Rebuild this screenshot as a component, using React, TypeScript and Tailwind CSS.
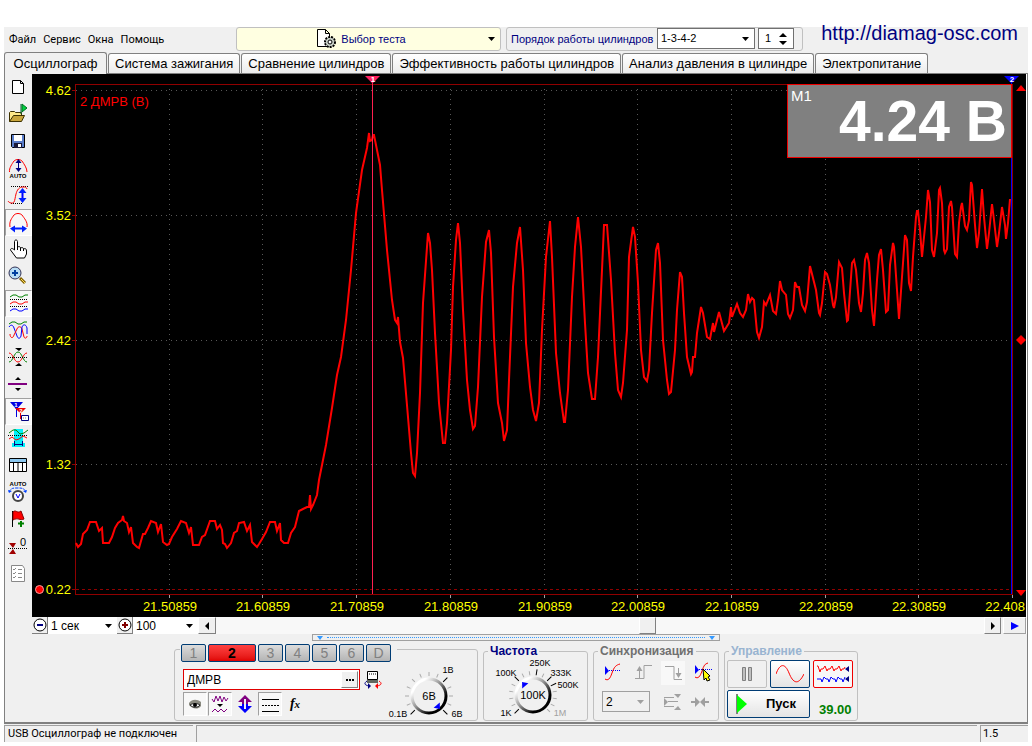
import { ReactElement, ReactNode } from 'react';

const TABS = [
  'Система зажигания',
  'Сравнение цилиндров',
  'Эффективность работы цилиндров',
  'Анализ давления в цилиндре',
  'Электропитание',
];

const TIME_MARKS = [
  { x: 169, label: '21.50859' },
  { x: 262, label: '21.60859' },
  { x: 356, label: '21.70859' },
  { x: 450, label: '21.80859' },
  { x: 544, label: '21.90859' },
  { x: 637, label: '22.00859' },
  { x: 731, label: '22.10859' },
  { x: 825, label: '22.20859' },
  { x: 918, label: '22.30859' },
];

const LEVELS = [
  { y: 90, label: '4.62' },
  { y: 215, label: '3.52' },
  { y: 340, label: '2.42' },
  { y: 464, label: '1.32' },
  { y: 589, label: '0.22' },
];

// mass air flow sensor samples
const TRACE =
  '76,543 78,547 81,544 83,534 87,530 90,522 96,522 99,531 102,528 103,543 109,543 112,537 115,528 118,523 122,520 123,516 124,521 127,523 129,532 131,527 133,543 137,547 139,548 143,534 145,534 148,528 151,521 156,523 158,532 161,524 163,542 167,545 169,544 172,537 177,529 181,521 186,523 189,533 191,527 193,545 199,545 202,537 205,535 210,521 215,521 217,529 220,525 222,530 223,543 225,544 227,548 231,543 234,533 237,531 239,523 244,522 247,531 250,525 252,542 257,547 259,544 262,539 266,532 270,522 275,522 277,531 280,523 281,540 284,543 288,543 291,533 295,527 299,511 303,509 307,507 309,507 310,495 311,509 313,505 317,495 319,480 326,445 332,408 337,375 341,357 346,320 351,270 356,213 362,170 367,148 369,133 370,141 372,140 373,135 374,135 377,150 380,165 382,190 387,250 392,300 395,320 397,323 398,317 400,342 403,358 408,417 411,453 413,473 415,476 417,453 420,393 423,303 428,233 430,243 432,270 435,333 439,403 443,443 445,443 447,423 451,350 453,287 456,240 458,223 460,243 463,310 467,380 470,410 473,429 475,426 478,387 482,297 486,242 489,230 491,253 494,337 498,403 502,423 504,441 507,430 509,380 513,287 517,243 520,227 523,270 526,343 530,387 533,410 536,421 539,403 542,330 546,257 550,221 552,257 556,353 560,393 564,422 565,422 568,390 572,297 575,247 578,217 581,247 585,323 588,373 592,399 595,399 598,357 602,270 604,225 607,225 611,280 615,353 618,390 621,397 623,383 627,330 629,257 633,227 635,237 638,283 641,350 644,377 647,381 649,370 652,313 656,250 658,243 660,263 663,340 667,380 669,394 671,392 675,350 677,310 680,272 682,277 684,313 687,357 691,374 692,372 693,357 695,357 697,333 701,307 703,313 707,337 710,339 713,323 714,332 719,312 724,331 729,323 731,307 732,317 737,304 740,313 743,317 746,310 748,294 750,302 752,298 754,300 757,332 759,338 762,327 764,302 766,305 770,295 773,311 776,314 778,300 780,281 782,290 786,295 788,314 790,318 793,310 795,282 797,287 799,287 802,305 805,311 807,302 810,266 812,274 816,290 819,313 820,315 822,303 825,272 827,274 830,285 833,305 834,308 836,297 839,262 842,268 844,293 847,321 848,320 852,263 854,260 856,270 859,303 861,312 863,293 865,260 867,253 869,263 872,310 874,326 877,280 879,255 881,249 883,270 886,312 888,310 890,265 893,243 894,247 897,290 899,319 902,277 905,235 907,240 909,283 911,291 913,257 916,217 917,211 918,211 920,230 922,257 923,247 926,217 928,190 930,202 932,250 934,257 937,233 939,190 940,188 942,203 944,250 945,253 947,249 949,207 951,201 952,207 955,254 957,257 959,223 961,207 962,203 965,226 967,230 969,220 971,182 972,185 975,225 977,248 979,233 982,189 984,217 987,249 989,233 992,204 994,220 997,247 999,233 1002,207 1005,225 1006,239 1008,223 1010,199';

interface Tool {
  title: string;
  pressed?: boolean;
  art: ReactNode;
}

const TOOLS: Tool[] = [
  {
    title: 'Новый',
    art: <path d="M4.5 3.5h8l3 3v10h-11zM12.5 3.5v3h3" fill="#fff" stroke="#000" />,
  },
  {
    title: 'Открыть',
    art: (
      <>
        <path d="M1.5 17.5v-9l1-1h4l1 1h6v3" fill="#ffe98a" stroke="#3c3000" />
        <path d="M1.5 17.5l4-6h11l-3 6z" fill="#c9a63c" stroke="#3c3000" />
        <path d="M13 0v10" stroke="#006030" />
        <path d="M14 0l5 4-5 4z" fill="#00d040" stroke="#007020" />
      </>
    ),
  },
  {
    title: 'Сохранить',
    art: (
      <>
        <path d="M3.5 3.5h13v13h-12l-1-1z" fill="#5b7ecb" stroke="#000" />
        <path d="M6 4h8v6H6z" fill="#fff" />
        <path d="M6 12h8v5H6z" fill="#1a1a3a" />
        <path d="M10 13h3v3h-3z" fill="#fff" />
      </>
    ),
  },
  {
    title: 'Автоматический масштаб',
    art: (
      <>
        <path d="M1.5 14C1 10 4 6 6 3c2-2 6-2 8 0 2 3 5 7 5 11" stroke="#f00" fill="none" />
        <path d="M10.5 2v11" stroke="#000080" />
        <path d="M10.5 1l3 4h-6zM10.5 14l3-4h-6z" fill="#000080" />
        <text x="10" y="20" fontSize="6" fontWeight="bold" textAnchor="middle">AUTO</text>
      </>
    ),
  },
  {
    title: 'Масштаб по вертикали',
    art: (
      <>
        <path d="M3 1.500h17M3 18.500h12" stroke="#000" strokeDasharray="1 1" />
        <path d="M0 16c1 2 5 3 6 1s1-4 2-8 3-7 7-7c3 0 3 0 4 2" stroke="#f00" fill="none" />
        <path d="M14.500 5v11" stroke="#00f" strokeWidth="2" />
        <path d="M14.500 3l4 5h-8zM14.500 18l4-5h-8z" fill="#0020ff" />
      </>
    ),
  },
  {
    title: 'Масштаб по горизонтали',
    pressed: true,
    art: (
      <>
        <path d="M2 15C1 9 4 6 6 3c2-2 6-2 8 0 2 3 6 7 5 12" stroke="#f00" fill="none" />
        <path d="M4 16.500h13" stroke="#0020ff" strokeWidth="2" />
        <path d="M2 16.500l5-3v7zM19 16.500l-5-3v7z" fill="#0020ff" />
      </>
    ),
  },
  {
    title: 'Перемещение',
    art: (
      <path
        d="M6.500 11V2.500c0-2 3-2 3 0V8c2-1 3 0 3 1 2-1 3 0 3 1 2-1 3 0 3 2v3l-2 4h-8l-6-8c0-2 2-2 4 0zM9.500 8v3M12.500 9v3M15.500 10v2"
        fill="#fff"
        stroke="#000"
      />
    ),
  },
  {
    title: 'Лупа',
    art: (
      <>
        <path d="M12 12l5 5" stroke="#806000" strokeWidth="3" />
        <path d="M13 13l4 4" stroke="#ffe060" />
        <circle cx="7" cy="7" r="6" fill="#b8dcf5" stroke="#335" />
        <path d="M4 7h6M7 4v6" stroke="#003fa0" strokeWidth="2" />
      </>
    ),
  },
  {
    title: 'Разделить каналы',
    pressed: true,
    art: (
      <>
        <path d="M2 4l3-2h3l3 2h3l3-2h3" stroke="#008000" fill="none" />
        <path d="M2 6.500h18M2 13.500h18" stroke="#000" strokeDasharray="1 1" />
        <path d="M2 11l3-2h3l3 2h3l3-2h3" stroke="#f00" fill="none" />
        <path d="M2 18l3-2h3l3 2h3l3-2h3" stroke="#00f" fill="none" />
      </>
    ),
  },
  {
    title: 'Наложить каналы',
    art: (
      <>
        <path d="M1 4l3-2h3l3 2h3l3-2h3" stroke="#008000" fill="none" />
        <path d="M1 7c2-3 4-2 5 1l3 8c1 3 3 3 4 0" stroke="#00f" fill="none" />
        <path d="M2 14c0 4 3 5 4 1l3-6c1-3 4-3 5 0l2 8c1 2 3 1 3-1" stroke="#f00" fill="none" />
        <path d="M13 16l1-9c1-3 4-3 5 1v6" stroke="#00f" fill="none" />
      </>
    ),
  },
  {
    title: 'Совместить нули',
    art: (
      <>
        <path d="M1 15c4 0 5-10 9-10s5 10 9 10" stroke="#008000" fill="none" />
        <path d="M1 6c4 0 5 9 9 9s5-9 9-9" stroke="#f00" fill="none" />
        <path d="M0 10.500h20" stroke="#000" strokeDasharray="1 1" />
        <path d="M7 1h7l-3 3zM7 19h7l-3-3z" />
      </>
    ),
  },
  {
    title: 'Центр',
    art: (
      <>
        <path d="M0 10h19" stroke="#800080" strokeWidth="2" />
        <path d="M10 3l3 3H7zM10 17l3-3H7z" />
      </>
    ),
  },
  {
    title: 'Маркеры',
    pressed: true,
    art: (
      <>
        <path d="M2 1h13L9 8v8H8V8z" fill="#0000e0" />
        <path d="M7 7h11l-5 5v6h-1v-6z" fill="#f00000" />
        <text x="8" y="6" fontSize="6" fontWeight="bold" textAnchor="middle" fill="#fff">1</text>
        <text x="13" y="12" fontSize="6" fontWeight="bold" textAnchor="middle" fill="#fff">2</text>
        <path d="M13.500 14.500h7v5h-7z" fill="#fff" stroke="#000080" />
        <path d="M15 17h4" stroke="#888" strokeDasharray="1 1" />
      </>
    ),
  },
  {
    title: 'Измерения',
    art: (
      <>
        <path d="M6 1h9v14h2v4H4v-4h2z" fill="#00f0f8" />
        <path d="M1 5l4-3h3l4 4 4-1 4-3" stroke="#008000" fill="none" />
        <path d="M1 11l3-2 4 3 3-1 4-3 4 2" stroke="#f00" fill="none" />
        <path d="M0 7.500h20" stroke="#000" strokeDasharray="1 1" />
        <path d="M6.500 13v5M14.500 13v5M7 16.500h7" stroke="#000080" />
      </>
    ),
  },
  {
    title: 'Таблица',
    art: (
      <>
        <path d="M1.500 3.500h17v13h-17z" fill="#fff" stroke="#000" />
        <path d="M2 4h16v3H2z" fill="#8cc8f0" />
        <path d="M2 7.500h16M5.500 7v9M10 7v9M14.500 7v9" stroke="#000" />
      </>
    ),
  },
  {
    title: 'Авто вольтметр',
    art: (
      <>
        <text x="10" y="4" fontSize="6" fontWeight="bold" textAnchor="middle">AUTO</text>
        <circle cx="10" cy="14" r="5" fill="#fff" stroke="#444" strokeWidth="2" />
        <path d="M8 12l2 4 2-4" stroke="#00f" fill="none" />
        <path d="M1 10c2-4 4-4 8-4 5 0 7 0 9 4" stroke="#0040ff" fill="none" strokeDasharray="3 1" />
        <path d="M0 8l4 1-3 2zM19 8l-4 1 3 2z" fill="#0040ff" />
      </>
    ),
  },
  {
    title: 'Добавить метку',
    art: (
      <>
        <path d="M4.500 2v16" stroke="#000" />
        <path d="M5 3c3-3 4 2 8-1l3 8c-4 2-6-2-11 1z" fill="#f00" stroke="#800" />
        <path d="M10 14.500h6M13 12v6" stroke="#008000" strokeWidth="2" />
      </>
    ),
  },
  {
    title: 'Установить ноль',
    art: (
      <>
        <path d="M1 7h7l-3 5zM1 18h7l-3-5z" fill="#a00000" />
        <path d="M0 12.500h20" stroke="#000" strokeDasharray="1 1" />
        <text x="12" y="10" fontSize="11">0</text>
      </>
    ),
  },
  {
    title: 'Протокол',
    art: (
      <>
        <path d="M3.500 2.500h11l2 3v13h-13z" fill="#fff" stroke="#888" />
        <path d="M5 6l1 1 2-2M5 10l1 1 2-2M5 14l1 1 2-2M10 6.500h4M10 10.500h4M10 14.500h4" stroke="#888" fill="none" />
      </>
    ),
  },
];

const Arrow = (): ReactElement => (
  <svg className="pointer-events-none absolute right-1 h-2 w-2" viewBox="0 0 8 8" aria-hidden="true">
    <path d="M0 2h7L3.500 6z" fill="currentColor" />
  </svg>
);

const Combo = ({ label, value, className }: { label: string; value: string; className: string }): ReactElement => (
  <div className={`relative flex items-center ${className}`}>
    <select aria-label={label} className="h-full w-full appearance-none bg-transparent pl-[3px] focus:outline-none">
      <option>{value}</option>
    </select>
    <Arrow />
  </div>
);

interface Mark {
  angle: number;
  text: string;
  x: number;
  y: number;
  dim?: boolean;
}

interface DialProps {
  label: string;
  value: string;
  step: number;
  pointer: number;
  marks: Mark[];
  className: string;
}

const Dial = ({ label, value, step, pointer, marks, className }: DialProps): ReactElement => {
  const ticks: number[] = [];
  for (let a = -135; a <= 135; a += step) ticks.push(a);

  return (
    <svg className={className} viewBox="-46 -38 92 64" role="img" aria-label={label}>
      <defs>
        <linearGradient id="rim" x1="0" y1="0" x2="1" y2="1">
          <stop offset="0.2" stopColor="#fff" />
          <stop offset="0.45" stopColor="#999" />
          <stop offset="0.75" stopColor="#000" />
        </linearGradient>
      </defs>
      {ticks.map((a) => {
        const major = marks.some((m) => m.angle === a && !m.dim);
        return (
          <line
            key={a}
            y1="-20"
            y2={major ? -26 : -24}
            transform={`rotate(${a})`}
            stroke={major ? '#000' : '#aaa'}
          />
        );
      })}
      <circle r="17" fill="#f0f0f0" stroke="url(#rim)" strokeWidth="3" />
      <path d="M0 -17l4 5h-8z" fill="#00f" transform={`rotate(${pointer})`} />
      <text y="4" fontSize="11" textAnchor="middle">{value}</text>
      {marks.map((m) => (
        <text key={m.text} x={m.x} y={m.y} fontSize="9" textAnchor="middle" fill={m.dim ? '#a0a0a0' : '#000'}>
          {m.text}
        </text>
      ))}
    </svg>
  );
};

const Scope = (): ReactElement => (
  <svg className="block h-auto w-full bg-black" viewBox="32 74 994 543" role="img" aria-label="2 ДМРВ (В)">
    <g stroke="#585858" strokeDasharray="1 4" shapeRendering="crispEdges">
      {TIME_MARKS.map((m) => (
        <line key={m.x} x1={m.x + 0.5} x2={m.x + 0.5} y1="89" y2="594" />
      ))}
      {LEVELS.slice(0, 4).map((l) => (
        <line key={l.y} x1="76" x2="1011" y1={l.y + 0.5} y2={l.y + 0.5} />
      ))}
    </g>
    <g stroke="#900000" fill="none" shapeRendering="crispEdges">
      <rect x="75.5" y="84.5" width="937" height="510" />
      <line x1="76" x2="1011" y1="589.5" y2="589.5" strokeDasharray="3 3" />
      {LEVELS.map((l) => (
        <line key={l.y} x1="72" x2="75" y1={l.y + 0.5} y2={l.y + 0.5} />
      ))}
    </g>
    <g stroke="#a0a0a0">
      {TIME_MARKS.map((m) => (
        <line key={m.x} x1={m.x + 0.5} x2={m.x + 0.5} y1="595" y2="598" />
      ))}
      <line x1="1012.5" x2="1012.5" y1="595" y2="598" />
    </g>
    <line x1="1011.5" x2="1011.5" y1="79" y2="594" stroke="#0000ff" />
    <polyline points={TRACE} fill="none" stroke="#ff0000" strokeWidth="2" />
    <line x1="372.5" x2="372.5" y1="79" y2="594" stroke="#ff2050" />
    <path d="M365 76h15l-7 7h-1z" fill="#ff2060" />
    <path d="M1004 76h15l-7 7h-1z" fill="#0000ff" />
    <g fontSize="8" fontWeight="bold" fill="#fff" textAnchor="middle">
      <text x="373" y="82">1</text>
      <text x="1012" y="82">2</text>
    </g>
    <g fill="#ff0000">
      <path d="M1021 85l5 6h-10z" />
      <path d="M1021 335l5 5-5 5-5-5z" />
      <path d="M1021 596l5-6h-10z" />
    </g>
    <circle cx="39.5" cy="589.5" r="4" fill="#ff0000" stroke="#ffa0a0" />
    <g fontSize="13" fill="#ffff00">
      {LEVELS.map((l) => (
        <text key={l.y} x="71" y={l.y + 5} textAnchor="end">{l.label}</text>
      ))}
      {TIME_MARKS.map((m) => (
        <text key={m.x} x={m.x + 1} y="611" textAnchor="middle">{m.label}</text>
      ))}
      <text x="1025" y="611" textAnchor="end">22.408</text>
    </g>
    <text x="80" y="106" fontSize="13" fill="#ff0000">2 ДМРВ (В)</text>
  </svg>
);

const Header = (): ReactElement => (
  <header className="flex h-[25px] items-start text-[11px]">
    <nav className="flex w-[232px] gap-[7px] pl-[5px] pt-[5px] font-[Roboto] leading-4">
      <button>Файл</button>
      <button>Сервис</button>
      <button>Окна</button>
      <button>Помощь</button>
    </nav>
    <button className="relative flex h-6 w-[265px] items-center justify-center gap-1 rounded-[3px] border border-[#c0c0c0] bg-[#ffffe1] pr-3.5">
      <svg className="h-5 w-5" viewBox="0 0 20 20" aria-hidden="true">
        <path d="M.5 .5h8l4 4v13h-12zM8.5 .5v4h4" fill="#fff" stroke="#000" />
        <circle cx="13" cy="13" r="5" fill="#b8c0b8" stroke="#000" strokeWidth="2" strokeDasharray="2 1" />
        <circle cx="13" cy="13" r="4" fill="#c8d0c8" />
        <circle cx="13" cy="13" r="2" fill="#fff" stroke="#000" />
      </svg>
      <span className="text-[#000080]">Выбор теста</span>
      <Arrow />
    </button>
    <div className="ml-[5px] flex h-6 w-[297px] items-start rounded-[3px] border border-[#c0c0c0] pl-1">
      <span className="w-[146px] whitespace-nowrap leading-[22px] text-[#000080]">Порядок работы цилиндров</span>
      <Combo label="Порядок работы цилиндров" value="1-3-4-2" className="h-[21px] w-[98px] border border-[#707070] bg-white" />
      <div className="ml-[3px] flex h-[21px] w-9 items-center border border-[#707070] bg-white">
        <input
          type="number"
          aria-label="Номер цилиндра"
          defaultValue={1}
          className="w-5 appearance-none pl-1.5 [-moz-appearance:textfield] focus:outline-none [&::-webkit-inner-spin-button]:appearance-none"
        />
        <svg className="h-4 w-2" viewBox="0 0 8 16" aria-hidden="true">
          <path d="M4 2l4 4H0zM4 14l4-4H0z" />
        </svg>
      </div>
    </div>
    <a href="http://diamag-osc.com" className="-mt-1.5 ml-auto pr-2.5 text-xl leading-6 text-[#000080]">
      http://diamag-osc.com
    </a>
  </header>
);

const Tabs = (): ReactElement => (
  <div role="tablist" className="flex h-[22px] items-end gap-px border-b border-[#808080] text-[13px]">
    <button role="tab" aria-selected="true" className="-mb-px h-[22px] w-[103px] whitespace-nowrap rounded-t-[3px] border border-b-0 border-[#808080] bg-[#f0f0f0] leading-5">
      Осциллограф
    </button>
    {TABS.map((t) => (
      <button
        key={t}
        role="tab"
        aria-selected="false"
        className="h-5 whitespace-nowrap rounded-t-[3px] border border-b-0 border-[#808080] bg-linear-to-b from-white to-[#ececec] px-1.5 leading-[19px]"
      >
        {t}
      </button>
    ))}
  </div>
);

const ScrollRow = (): ReactElement => (
  <div className="flex h-[17px] text-xs">
    <button aria-label="Уменьшить" className="flex w-4 items-center justify-center border-b border-r border-[#808080]">
      <svg className="h-4 w-4 shrink-0" viewBox="0 0 16 16" aria-hidden="true">
        <circle cx="8" cy="8" r="6" fill="#fff" stroke="#000" />
        <path d="M5 8h6" stroke="#000080" strokeWidth="2" />
      </svg>
    </button>
    <Combo label="Время" value="1 сек" className="w-[69px] bg-white" />
    <button aria-label="Увеличить" className="flex w-4 items-center justify-center border-b border-r border-[#808080]">
      <svg className="h-4 w-4 shrink-0" viewBox="0 0 16 16" aria-hidden="true">
        <circle cx="8" cy="8" r="6" fill="#fff" stroke="#000" />
        <path d="M5 8h6M8 5v6" stroke="#800000" strokeWidth="2" />
      </svg>
    </button>
    <Combo label="Масштаб" value="100" className="w-[65px] bg-white" />
    <button aria-label="Влево" className="flex w-[18px] items-center justify-center border border-[#808080] border-l-white border-t-white">
      <svg className="h-2 w-2" viewBox="0 0 8 8" aria-hidden="true"><path d="M6 0v8L2 4z" /></svg>
    </button>
    <div className="flex-[424] bg-[#f8f8f8]" />
    <div className="w-[17px] border border-[#808080] border-l-white border-t-white" />
    <div className="flex-[328] bg-[#f8f8f8]" />
    <button aria-label="Вправо" className="flex w-[17px] items-center justify-center border border-[#808080] border-l-white border-t-white">
      <svg className="h-2 w-2" viewBox="0 0 8 8" aria-hidden="true"><path d="M2 0v8l4-4z" /></svg>
    </button>
    <button aria-label="Воспроизвести" className="ml-0.5 flex w-[23px] items-center justify-center border border-[#a0a0a0] border-l-white border-t-white">
      <svg className="h-2 w-2" viewBox="0 0 8 8" aria-hidden="true"><path d="M0 0v8l8-4z" fill="#00f" /></svg>
    </button>
  </div>
);

const Channels = (): ReactElement => (
  <section className="relative h-[72px] w-[304px] rounded-[3px] border border-[#c0c0c0]">
    <div className="-mt-[6px] ml-[5px] flex w-[217px] gap-0.5 bg-[#f0f0f0] pl-px text-sm leading-4">
      {['1', '2', '3', '4', '5', '6', 'D'].map((c) =>
        c === '2' ? (
          <button key={c} className="h-[18px] w-12 rounded-[2px] border border-[#003c74] bg-linear-to-b from-[#ff4040] to-[#e00000] font-bold">
            {c}
          </button>
        ) : (
          <button key={c} className="h-[18px] w-[25px] rounded-[2px] border border-[#003c74] bg-linear-to-b from-[#dcdcdc] to-[#b4b4b4] text-[#808080]">
            {c}
          </button>
        ),
      )}
    </div>
    <div className="flex">
      <div className="pl-2 pt-[7px]">
        <div className="flex items-center gap-1">
          <div className="flex h-[21px] w-[177px] items-center border border-[#e00000] bg-white pr-px">
            <input aria-label="Название канала" defaultValue="ДМРВ" className="min-w-0 flex-1 pl-[3px] text-xs focus:outline-none" />
            <button aria-label="Выбрать датчик" className="flex h-[17px] w-[17px] items-center justify-center border border-[#808080] border-l-white border-t-white bg-[#f0f0f0]">
              <svg className="h-2 w-2" viewBox="0 0 8 8" aria-hidden="true"><path d="M0 3h2v2H0zM3 3h2v2H3zM6 3h2v2H6z" /></svg>
            </button>
          </div>
          <svg className="h-[18px] w-[18px]" viewBox="0 0 18 18" aria-hidden="true">
            <path d="M3.5 .5h10v8h-10z" fill="#fff" stroke="#000" />
            <path d="M5 3h7" stroke="#000" strokeDasharray="1 1" />
            <path d="M3 9h11v3H3z" fill="#606860" />
            <path d="M3 10C0 12 0 14 5 15" stroke="#000080" fill="none" />
            <path d="M4 12l3 3-3 3z" fill="#000080" />
            <path d="M15 10c3 2 3 4-2 5" stroke="#f00" fill="none" />
            <path d="M14 12l-3 3 3 3z" fill="#f00" />
          </svg>
        </div>
        <div className="mt-0.5 flex gap-px">
          <button aria-label="Показать" className="flex h-6 w-6 items-center justify-center border border-[#a0a0a0] border-b-white border-r-white bg-[#f8f8f8]">
            <svg className="h-5 w-5" viewBox="0 0 20 20" aria-hidden="true">
              <path d="M4 9c3-4 8-4 12-1v4c-3 4-9 3-12-1z" fill="#8a8a80" />
              <path d="M5 11c3-2 7-2 10 0-2 3-7 3-10 0z" fill="#fff" stroke="#222" />
              <circle cx="10" cy="11" r="2" />
            </svg>
          </button>
          <button aria-label="Фильтр" className="flex h-6 w-6 items-center justify-center border border-[#a0a0a0] border-b-white border-r-white bg-[#f8f8f8]">
            <svg className="h-5 w-5" viewBox="0 0 20 20" aria-hidden="true">
              <path d="M2 5l2 3 2-6 2 5 2-5 2 6 2-5 2 4 2-3" stroke="#800080" fill="none" />
              <path d="M7 10h6l-3 3z" />
              <path d="M2 18l3-3 3 3 3-3 3 3 3-3" stroke="#800080" fill="none" />
            </svg>
          </button>
          <button aria-label="Инвертировать" className="flex h-6 w-6 items-center justify-center">
            <svg className="h-5 w-5" viewBox="0 0 20 20" aria-hidden="true">
              <path d="M10 1l7 7h-4v2H7V8H3z" fill="#800080" />
              <path d="M10 19l7-7h-4v-2H7v2H3z" fill="#0000ff" />
              <path d="M10 5v10" stroke="#f0f0f0" strokeWidth="2" />
            </svg>
          </button>
          <button aria-label="Линии" className="flex h-6 w-6 items-center justify-center border border-[#a0a0a0] border-b-white border-r-white bg-[#f8f8f8]">
            <svg className="h-5 w-5" viewBox="0 0 20 20" aria-hidden="true">
              <path d="M2 5.500h17M2 17.500h17" stroke="#000" />
              <path d="M2 11.500h17" stroke="#000" strokeDasharray="2 1" />
            </svg>
          </button>
          <button className="h-6 w-6 font-['Liberation_Serif',serif] text-sm font-bold italic leading-5">
            f<span className="text-[11px]">x</span>
          </button>
        </div>
      </div>
      <Dial
        label="Диапазон"
        value="6В"
        step={22.5}
        pointer={140}
        className="-mt-1 ml-px h-16 w-[92px]"
        marks={[
          { angle: 45, text: '1В', x: 19, y: -23 },
          { angle: 135, text: '6В', x: 28, y: 21 },
          { angle: -135, text: '0.1В', x: -31, y: 21 },
        ]}
      />
    </div>
  </section>
);

const GROUP = 'rounded-[3px] border border-[#c0c0c0]';
const LEGEND = 'ml-1 px-0.5 text-xs font-bold leading-3';

const Frequency = (): ReactElement => (
  <fieldset className={`h-[76px] w-[105px] ${GROUP}`}>
    <legend className={`${LEGEND} text-[#000080]`}>Частота</legend>
    <Dial
      label="Частота"
      value="100K"
      step={18}
      pointer={-40}
      className="ml-[3px] h-16 w-[92px]"
      marks={[
        { angle: -135, text: '1K', x: -27, y: 21 },
        { angle: -45, text: '100K', x: -27, y: -19 },
        { angle: 9, text: '250K', x: 7, y: -29 },
        { angle: 45, text: '333K', x: 28, y: -19 },
        { angle: 63, text: '500K', x: 35, y: -7 },
        { angle: 135, text: '1M', x: 27, y: 21, dim: true },
      ]}
    />
  </fieldset>
);

const Sync = (): ReactElement => (
  <fieldset className={`h-[76px] w-[126px] ${GROUP}`}>
    <legend className={`${LEGEND} text-[#707070]`}>Синхронизация</legend>
    <div className="flex justify-around pl-1 pt-1">
      <button aria-label="По уровню">
        <svg className="h-6 w-6" viewBox="0 0 24 24" aria-hidden="true">
          <path d="M6 9.500h14" stroke="#00f" strokeDasharray="1 1" />
          <path d="M4 18c3 2 5 0 7-6s4-8 8-9" stroke="#f00" fill="none" />
          <path d="M4 5v9l4-4z" fill="#00f" />
        </svg>
      </button>
      <button aria-label="По фронту">
        <svg className="h-6 w-6" viewBox="0 0 24 24" aria-hidden="true">
          <path d="M4 17.500h9v-13h8M8.500 7v10" stroke="#a0a0a0" fill="none" />
          <path d="M8.500 5l3 5h-6z" fill="#a0a0a0" />
        </svg>
      </button>
      <button aria-label="По спаду" className="bg-[#f8f8f8]">
        <svg className="h-6 w-6" viewBox="0 0 24 24" aria-hidden="true">
          <path d="M4 5.500h9v13h8M17.500 7v8" stroke="#a0a0a0" fill="none" />
          <path d="M17.500 17l3-5h-6z" fill="#a0a0a0" />
        </svg>
      </button>
      <button aria-label="Вручную">
        <svg className="h-6 w-6" viewBox="0 0 24 24" aria-hidden="true">
          <path d="M6 8.500h15" stroke="#00f" strokeDasharray="1 1" />
          <path d="M4 16c3 2 5 0 7-6s3-7 6-8" stroke="#f00" fill="none" />
          <path d="M4 4v9l4-4z" fill="#00f" />
          <path d="M12 8l7 7-2 1 2 3-3 1-1-3-2 2z" fill="#ff0" stroke="#000" />
        </svg>
      </button>
    </div>
    <div className="flex items-center pl-2 pt-1.5">
      <Combo label="Канал синхронизации" value="2" className="h-[21px] w-12 border border-[#a0a0a0] text-xs text-[#a0a0a0] [&>select]:text-black" />
      <button aria-label="Уровень" className="ml-3">
        <svg className="h-5 w-5" viewBox="0 0 20 20" aria-hidden="true">
          <path d="M2 5.500h10M6 9.500h10M2 14.500h10" stroke="#a0a0a0" />
          <path d="M2 6v8l4-4zM12 2h7l-3 4zM12 18h7l-3-4z" fill="#a0a0a0" />
        </svg>
      </button>
      <button aria-label="Центрировать" className="ml-2">
        <svg className="h-5 w-5" viewBox="0 0 20 20" aria-hidden="true">
          <path d="M1 9h4V5l5 5-5 5v-4H1zM19 9h-4V5l-5 5 5 5v-4h4z" fill="#a0a0a0" />
        </svg>
      </button>
    </div>
  </fieldset>
);

const Control = (): ReactElement => (
  <fieldset className={`h-[76px] w-[134px] ${GROUP}`}>
    <legend className={`${LEGEND} text-[#99b4d1]`}>Управление</legend>
    <div className="flex gap-[3px] pl-0.5 pt-[3px]">
      <button aria-label="Пауза" className="flex h-7 w-10 items-center justify-center rounded-[2px] border border-[#c0c0c0]">
        <svg className="h-4 w-3" viewBox="0 0 12 16" aria-hidden="true">
          <path d="M1.5 1.5h3v13h-3zM7.5 1.5h3v13h-3z" fill="#c0c0c0" stroke="#808080" />
        </svg>
      </button>
      <button aria-label="Синус" className="flex h-7 w-10 items-center justify-center rounded-[2px] border border-[#003c74] bg-linear-to-b from-white to-[#e4e4e4]">
        <svg className="h-5 w-7" viewBox="0 0 28 20" aria-hidden="true">
          <path d="M0 10C4-1 9-1 13 9s9 13 15 1" stroke="#f00" fill="none" />
        </svg>
      </button>
      <button aria-label="Запись" className="flex h-7 w-10 items-center justify-center rounded-[2px] border border-[#f00000] bg-[#f8f8f8]">
        <svg className="h-5 w-8" viewBox="0 0 32 20" aria-hidden="true">
          <path d="M0 2h1l2 6 1-3h2l2-3 2 5 1-2h2l2-3 2 5 1-2h2l2-3 2 5 1-2h2l1-2" stroke="#f00" fill="none" />
          <path d="M0 15h4l1 3 2-5 2 2h2l1 3 2-5 2 2h2l1 3 2-5 2 2h2l1 3 2-5" stroke="#00f" fill="none" />
          <path d="M28 5l4-3v6zM28 15l4-3v6z" fill="#000080" />
        </svg>
      </button>
    </div>
    <div className="flex items-end pl-0.5 pt-0.5">
      <button className="flex h-7 w-[83px] items-center rounded-[2px] border border-[#003c74] bg-linear-to-b from-white to-[#e4e4e4] pl-2 text-[13px] font-bold">
        <svg className="mr-[18px] h-5 w-3" viewBox="0 0 12 20" aria-hidden="true">
          <path d="M1 0v20" stroke="#808080" strokeWidth="2" />
          <path d="M1 1v18l10-9z" fill="#00ff00" />
        </svg>
        Пуск
      </button>
      <output className="ml-[9px] text-[13px] font-bold leading-4 text-[#008000]">39.00</output>
    </div>
  </fieldset>
);

const App = (): ReactElement => {
  return (
    <div className="bg-white px-1 pb-1 pt-[27px] font-['Liberation_Sans',Arial,sans-serif] text-black">
      <div className="bg-[#f0f0f0]">
        <Header />
        <Tabs />
        <main className="border-b-2 border-l border-r border-[#808080]">
          <div className="flex">
            <div role="toolbar" className="flex w-[27px] shrink-0 flex-col">
              {TOOLS.map((t) => (
                <button
                  key={t.title}
                  title={t.title}
                  className={
                    t.pressed
                      ? 'flex h-[27px] border border-[#a0a0a0] border-b-white border-r-white bg-[#f8f8f8] pl-0.5 pt-0.5'
                      : 'flex h-[27px] pl-[3px] pt-[3px]'
                  }
                >
                  <svg className="h-5 w-5 shrink-0 overflow-visible" viewBox="0 0 20 20" aria-hidden="true">
                    {t.art}
                  </svg>
                </button>
              ))}
            </div>
            <div className="min-w-0 flex-1 border-r border-white">
              <div className="relative">
                <Scope />
                <div className="absolute right-[14px] top-[10px] h-[74px] w-[225px] border border-[#f00000] bg-[#808080] text-white">
                  <span className="absolute left-[3px] top-px text-[15px] leading-5">М1</span>
                  <output className="block pr-1 pt-1.5 text-right text-[57px] font-bold leading-[60px]">4.24 В</output>
                </div>
              </div>
              <ScrollRow />
            </div>
          </div>
          <div className="mx-auto flex h-[7px] w-[408px] items-center gap-1 border border-[#a0a0a0] px-1">
            <svg className="h-1 w-[6px]" viewBox="0 0 6 4" aria-hidden="true"><path d="M0 0h6L3 4z" fill="#3399ff" /></svg>
            <div className="h-px flex-1 border-t border-dotted border-[#3399ff]" />
            <svg className="h-1 w-[6px]" viewBox="0 0 6 4" aria-hidden="true"><path d="M0 0h6L3 4z" fill="#3399ff" /></svg>
          </div>
          <div className="flex items-end justify-center gap-[5px] pb-px pt-1">
            <Channels />
            <Frequency />
            <Sync />
            <Control />
          </div>
        </main>
        <footer className="flex gap-[3px] pt-px font-[Roboto] text-[11px] leading-4">
          <span className="w-[189px] border-l border-t border-[#a0a0a0] pl-[3px]">USB Осциллограф не подключен</span>
          <span className="flex-1 border-l border-t border-[#a0a0a0]" />
          <span className="w-[48px] border-l border-t border-[#a0a0a0] pl-0.5">1.5</span>
        </footer>
      </div>
    </div>
  );
};

export default App;
